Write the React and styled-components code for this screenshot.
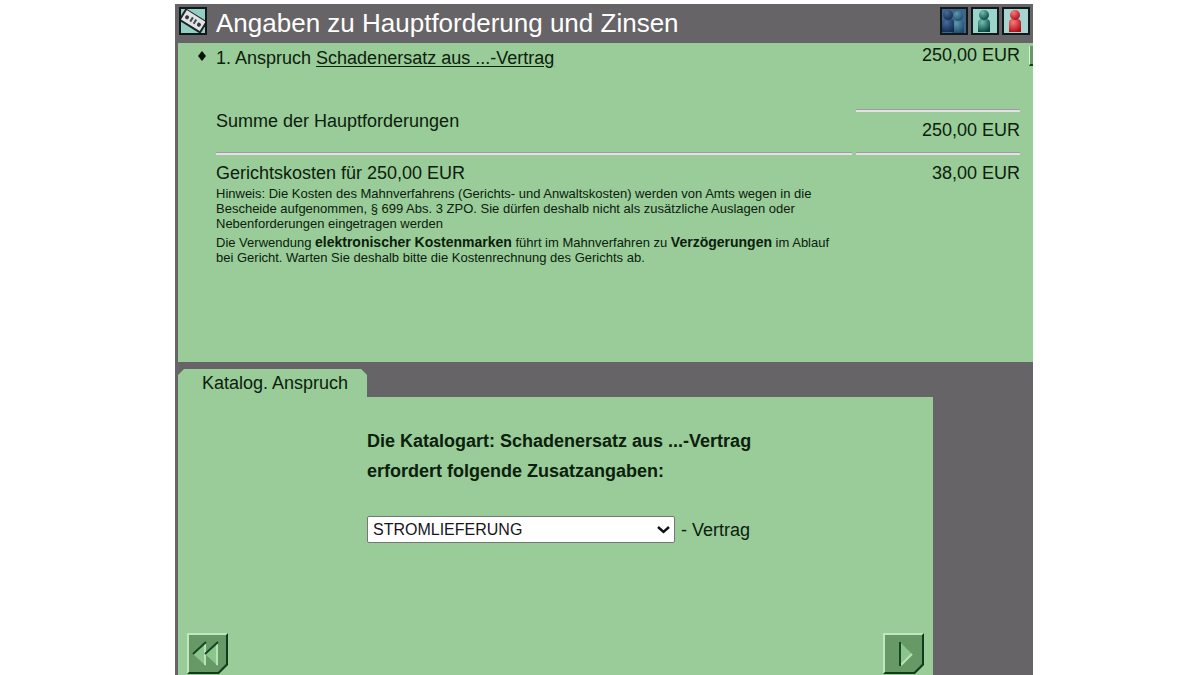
import React from 'react'
import styled, { createGlobalStyle } from 'styled-components';


const GlobalStyle = createGlobalStyle`
*{
  box-sizing: border-box;
}

body{
  margin: 0;
  background-color: #fff;
  color: #0c200c;
  font-family: 'Liberation Sans', Arial, sans-serif;
  font-size: 18px;
  line-height: 20px;
}
`

const Page = styled.div`
min-height: 100vh;
padding: 4px calc(14% - 1px) 0 175px;
display: flex;
flex-direction: column;
`

const Window = styled.main`
flex: 1;
display: flex;
flex-direction: column;
background-color: #666466;
border-left: 3px solid #666466;
`

const Header = styled.header`
display: flex;
align-items: center;
height: 39px;
padding: 0 3px 5px 1px;

h1{
  flex: 1;
  margin: 0 0 0 9px;
  padding-top: 3px;
  color: #fff;
  font-size: 26px;
  line-height: 30px;
  font-weight: 400;
}
`

const IconGroup = styled.div`
display: flex;
gap: 3px;
`

const IconButton = styled.button`
width: 28px;
height: 28px;
padding: 0;
border: 2px solid #10181c;
background-color: ${props => props.$bg};
cursor: pointer;

svg{
  display: block;
  width: 24px;
  height: 24px;
}
`

const Claims = styled.section`
min-height: 319px;
background-color: #99cc99;
`

const ClaimTable = styled.table`
width: 100%;
border-collapse: collapse;
table-layout: fixed;

td{
  padding: 0;
  vertical-align: top;
}

.bullet{
  width: 38px;
}
.amount{
  width: 168px;
}
.edge{
  width: 13px;
}

a{
  color: inherit;
  text-underline-offset: 2px;
}
`

const Label = styled.div`
padding-top: ${props => props.$top}px;
`

const Amount = styled.div`
padding-top: ${props => props.$top}px;
text-align: right;
`

const Bullet = styled.div`
padding: 8px 0 0 19px;

svg{
  display: block;
}
`

const Rule = styled.hr`
height: 3px;
margin: ${props => props.$inset ? '0 0 0 4px' : '0'};
border: 0;
border-top: 1px solid #a09ca4;
background-color: #e4e0e6;
`

const Note = styled.p`
margin: 0 16px 4px 0;
font-size: 13px;
line-height: 15px;

b{
  font-size: 14px;
}
`

const EditButton = styled.button`
display: block;
width: 4px;
height: 20px;
margin: 3px 0 0 auto;
padding: 0;
border: 0;
border-left: 1px solid #d8f0d8;
border-bottom: 2px solid #123c1c;
background-color: #669966;
`

const Tab = styled.h2`
align-self: flex-start;
margin: 7px 0 0;
padding: 4px 19px 4px 24px;
background-color: #99cc99;
clip-path: polygon(0 6px, 6px 0, calc(100% - 6px) 0, 100% 6px, 100% 100%, 0 100%);
font-size: 18px;
font-weight: 400;
`

const Form = styled.form`
flex: 1;
display: flex;
flex-direction: column;
margin-right: 100px;
padding: 29px 9px 1px;
background-color: #99cc99;
`

const Question = styled.label`
display: block;
margin-left: 180px;
font-weight: 700;
line-height: 30px;
`

const SelectRow = styled.div`
display: flex;
align-items: center;
gap: 6px;
margin: 30px 0 0 180px;
`

const SelectBox = styled.div`
display: grid;
grid-template-columns: 1fr 18px;
align-items: center;
width: 308px;

select{
  grid-area: 1 / 1 / 2 / 3;
  height: 27px;
  padding: 0 5px;
  appearance: none;
  border: 1px solid #767676;
  border-radius: 2px;
  background-color: #fff;
  color: #181420;
  font-family: inherit;
  font-size: 16px;
}

svg{
  grid-area: 1 / 2 / 2 / 3;
  pointer-events: none;
  z-index: 1;
}
`

const Actions = styled.div`
display: flex;
justify-content: space-between;
margin-top: auto;
`

const NavButton = styled.button`
width: 41px;
height: 41px;
padding: 0;
border: 0;
background: none;
cursor: pointer;

svg{
  display: block;
}
`

const Person = ({ x = 11, y = 0, id, light, dark }) => (
  <g transform={`translate(${x} ${y})`}>
    <radialGradient id={id} cx='35%' cy='25%' r='80%'>
      <stop offset='0' stopColor={light}/>
      <stop offset='1' stopColor={dark}/>
    </radialGradient>
    <path d='M-6 23V14Q-6 10 -2 10H2Q6 10 6 14V23Z' fill={`url(#${id})`}/>
    <circle cx='0' cy='6' r='5' fill={`url(#${id})`}/>
  </g>
)

const NavShape = ({ children }) => (
  <svg width='41' height='41' viewBox='0 0 41 41'>
    <path d='M0 0H41V32L32 41H0Z' fill='#103c1c'/>
    <path d='M0 0H41L39 2H2V39L0 41Z' fill='#bfe8bf'/>
    <path d='M2 2H39V31L31 39H2Z' fill='#669966'/>
    {children}
  </svg>
)

const App = () => {
  return (
    <>
      <GlobalStyle/>
      <Page>
        <Window>
          <Header>
            <IconButton type='button' $bg='#93cec5' aria-label='Kosten'>
              <svg viewBox='0 0 24 24'>
                <g transform='rotate(32 12 12)'>
                  <rect x='-1' y='5' width='26' height='14' fill='#1c2424'/>
                  <rect x='1' y='6' width='22' height='11' fill='#e2e3e4'/>
                  <circle cx='5' cy='12' r='2' fill='#34383c'/>
                  <circle cx='19' cy='12' r='2' fill='#34383c'/>
                  <path d='M10 9V14M14 9V14' stroke='#44494e' strokeWidth='2'/>
                </g>
              </svg>
            </IconButton>
            <h1>Angaben zu Hauptforderung und Zinsen</h1>
            <IconGroup>
              <IconButton type='button' $bg='#3f658a' aria-label='Beteiligte'>
                <svg viewBox='0 0 24 24'>
                  <Person id='pb' x={16} y={1} light='#5c9ab0' dark='#204a6a'/>
                  <Person id='pa' x={6} light='#456c98' dark='#142c50'/>
                </svg>
              </IconButton>
              <IconButton type='button' $bg='#9bd4ca' aria-label='Antragsteller'>
                <svg viewBox='0 0 24 24'>
                  <Person id='pc' light='#72bdb0' dark='#08453f'/>
                </svg>
              </IconButton>
              <IconButton type='button' $bg='#a5d5ce' aria-label='Antragsgegner'>
                <svg viewBox='0 0 24 24'>
                  <Person id='pd' light='#ff7777' dark='#a90f19'/>
                </svg>
              </IconButton>
            </IconGroup>
          </Header>

          <Claims>
            <ClaimTable>
              <colgroup>
                <col className='bullet'/>
                <col/>
                <col className='amount'/>
                <col className='edge'/>
              </colgroup>
              <tbody>
                <tr>
                  <td>
                    <Bullet>
                      <svg width='10' height='10' viewBox='0 0 10 10'>
                        <path d='M5 0L9 5L5 10L1 5Z' fill='#061506'/>
                      </svg>
                    </Bullet>
                  </td>
                  <td><Label $top={5}>1. Anspruch <a href='#anspruch'>Schadenersatz aus ...-Vertrag</a></Label></td>
                  <td><Amount $top={2}>250,00 EUR</Amount></td>
                  <td><EditButton type='button' aria-label='Bearbeiten'/></td>
                </tr>
                <tr>
                  <td/>
                  <td><Label $top={43}>Summe der Hauptforderungen</Label></td>
                  <td>
                    <Label $top={41}><Rule $inset/></Label>
                    <Amount $top={8}>250,00 EUR</Amount>
                  </td>
                  <td/>
                </tr>
                <tr>
                  <td/>
                  <td>
                    <Label $top={12}><Rule/></Label>
                    <Label $top={8}>Gerichtskosten für 250,00 EUR</Label>
                    <Label $top={3}>
                      <Note>Hinweis: Die Kosten des Mahnverfahrens (Gerichts- und Anwaltskosten) werden von Amts wegen in die<br/>Bescheide aufgenommen, § 699 Abs. 3 ZPO. Sie dürfen deshalb nicht als zusätzliche Auslagen oder<br/>Nebenforderungen eingetragen werden</Note>
                      <Note>Die Verwendung <b>elektronischer Kostenmarken</b> führt im Mahnverfahren zu <b>Verzögerungen</b> im Ablauf<br/>bei Gericht. Warten Sie deshalb bitte die Kostenrechnung des Gerichts ab.</Note>
                    </Label>
                  </td>
                  <td>
                    <Label $top={12}><Rule $inset/></Label>
                    <Amount $top={8}>38,00 EUR</Amount>
                  </td>
                  <td/>
                </tr>
              </tbody>
            </ClaimTable>
          </Claims>

          <Tab>Katalog. Anspruch</Tab>
          <Form>
            <Question htmlFor='vertrag'>
              Die Katalogart: Schadenersatz aus ...-Vertrag<br/>
              erfordert folgende Zusatzangaben:
            </Question>
            <SelectRow>
              <SelectBox>
                <select id='vertrag' defaultValue='strom'>
                  <option value='strom'>STROMLIEFERUNG</option>
                </select>
                <svg width='13' height='9' viewBox='0 0 13 9'>
                  <path d='M1 2L6.5 7L12 2' fill='none' stroke='#101010' strokeWidth='2.4'/>
                </svg>
              </SelectBox>
              <span>- Vertrag</span>
            </SelectRow>
            <Actions>
              <NavButton type='button' aria-label='Zurück'>
                <NavShape>
                  <path d='M19 10V33L6 21ZM31 10V33L18 21Z' fill='#8cc48e'/>
                  <path d='M18 11V32M30 11V32' stroke='#b6e3b6' strokeWidth='2'/>
                  <path d='M19 9L6 21M31 9L18 21' stroke='#174523' strokeWidth='2'/>
                </NavShape>
              </NavButton>
              <NavButton type='button' aria-label='Weiter'>
                <NavShape>
                  <path d='M18 10V33L29 21Z' fill='#8cc48e'/>
                  <path d='M18 32L29 21' stroke='#b6e3b6' strokeWidth='2'/>
                  <path d='M17 9V33' stroke='#174523' strokeWidth='2'/>
                </NavShape>
              </NavButton>
            </Actions>
          </Form>
        </Window>
      </Page>
    </>
  )
}

export default App
